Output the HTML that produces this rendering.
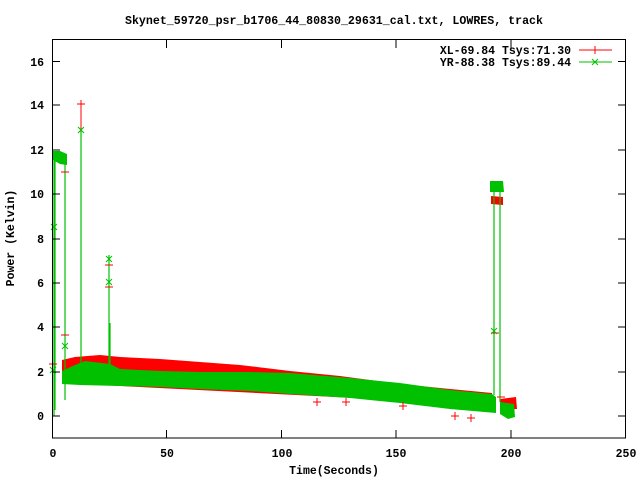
<!DOCTYPE html>
<html><head><style>
body{margin:0;background:#fff;}
svg{display:block;font-family:"Liberation Mono","DejaVu Sans Mono",monospace;font-weight:bold;font-size:11.5px;}
</style></head><body>
<svg width="640" height="480" viewBox="0 0 640 480">
<text x="334" y="24" text-anchor="middle" textLength="418" lengthAdjust="spacingAndGlyphs">Skynet_59720_psr_b1706_44_80830_29631_cal.txt, LOWRES, track</text>
<!-- red band -->
<polygon fill="#ff0000" points="62,360 75,357 100,355 120,357 160,359 200,362 240,365 290,371 340,376 400,384 450,389 492,393 492,405 62,383"/>
<!-- green band -->
<polygon fill="#00c000" points="62,371 75,365 85,361 110,364 120,369 160,371 200,372 250,372 290,373 350,378 400,383 450,390 492,394 496,397 496,413 450,409 400,403 350,398 290,394 250,391 200,389 160,387 120,386 80,385 62,384"/>
<!-- right segments -->
<polygon fill="#ff0000" points="500,399 516,397 517,409 500,410"/>
<polygon fill="#00c000" points="500,402 514,404 515,417 508,419 500,414"/>
<!-- top clusters -->
<polygon fill="#00c000" points="53,151 60,151 67,154 67,165 60,164 53,160"/>
<polygon fill="#00c000" points="490,181 503,181 504,192 490,192"/>
<polygon fill="#ff0000" points="491,196 503,197 503,205 491,204"/>
<!-- spikes -->
<g stroke="#00c000" stroke-width="1.2">
<line x1="54" y1="416" x2="54" y2="152"/>
<line x1="55" y1="160" x2="55" y2="410"/>
<line x1="65" y1="155" x2="65" y2="400"/>
<line x1="81" y1="130" x2="81" y2="380"/>
<line x1="109" y1="255" x2="109" y2="380"/>
<line x1="110" y1="323" x2="110" y2="380"/>
<line x1="494" y1="185" x2="494" y2="395"/>
<line x1="500" y1="185" x2="500" y2="402"/>
</g>
<line x1="81" y1="104" x2="81" y2="130" stroke="#ff0000"/>
<g stroke="#ff0000" stroke-width="1">
<path d="M77,104h8M81,100v8 M61,172h8 M61,335h8 M105,265h8 M105,287h8 M491,333h8 M497,397h8 M313,402h8M317,398v8 M342,402h8M346,398v8 M399,406h8M403,402v8 M451,416h8M455,412v8 M467,418h8M471,414v8 M49,364h8"/>
</g>
<g stroke="#00c000" stroke-width="1">
<path d="M78,127l6,6M84,127l-6,6 M51,224l6,6M57,224l-6,6 M62,343l6,6M68,343l-6,6 M106,256l6,6M112,256l-6,6 M106,279l6,6M112,279l-6,6 M491,328l6,6M497,328l-6,6 M50,367l6,6M56,367l-6,6"/>
</g>
<!-- axes box -->
<rect x="52.5" y="39.5" width="573" height="398.5" fill="none" stroke="#000" stroke-width="1"/>
<g stroke="#000">
<path d="M52,416h8M626,416h-8 M52,372h8M626,372h-8 M52,327h8M626,327h-8 M52,283h8M626,283h-8 M52,239h8M626,239h-8 M52,194h8M626,194h-8 M52,150h8M626,150h-8 M52,105h8M626,105h-8 M52,61.5h8M626,61.5h-8"/>
<path d="M166.5,438v-8M166.5,40v8 M281.5,438v-8M281.5,40v8 M396,438v-8M396,40v8 M511,438v-8M511,40v8"/>
</g>
<g text-anchor="end">
<text x="44" y="420">0</text><text x="44" y="376">2</text><text x="44" y="331">4</text><text x="44" y="287">6</text><text x="44" y="243">8</text><text x="44" y="198">10</text><text x="44" y="154">12</text><text x="44" y="109">14</text><text x="44" y="66">16</text>
</g>
<g text-anchor="middle">
<text x="53" y="457">0</text><text x="167" y="457">50</text><text x="282" y="457">100</text><text x="396" y="457">150</text><text x="511" y="457">200</text><text x="626" y="457">250</text>
<text x="334" y="474">Time(Seconds)</text>
</g>
<text transform="translate(14,238) rotate(-90)" text-anchor="middle">Power (Kelvin)</text>
<text x="571" y="54" text-anchor="end">XL-69.84 Tsys:71.30</text>
<text x="571" y="66" text-anchor="end">YR-88.38 Tsys:89.44</text>
<path d="M579,50h33M595,46v8" stroke="#ff0000"/>
<path d="M579,62h33M592,59l6,6M598,59l-6,6" stroke="#00c000"/>
</svg>
</body></html>
